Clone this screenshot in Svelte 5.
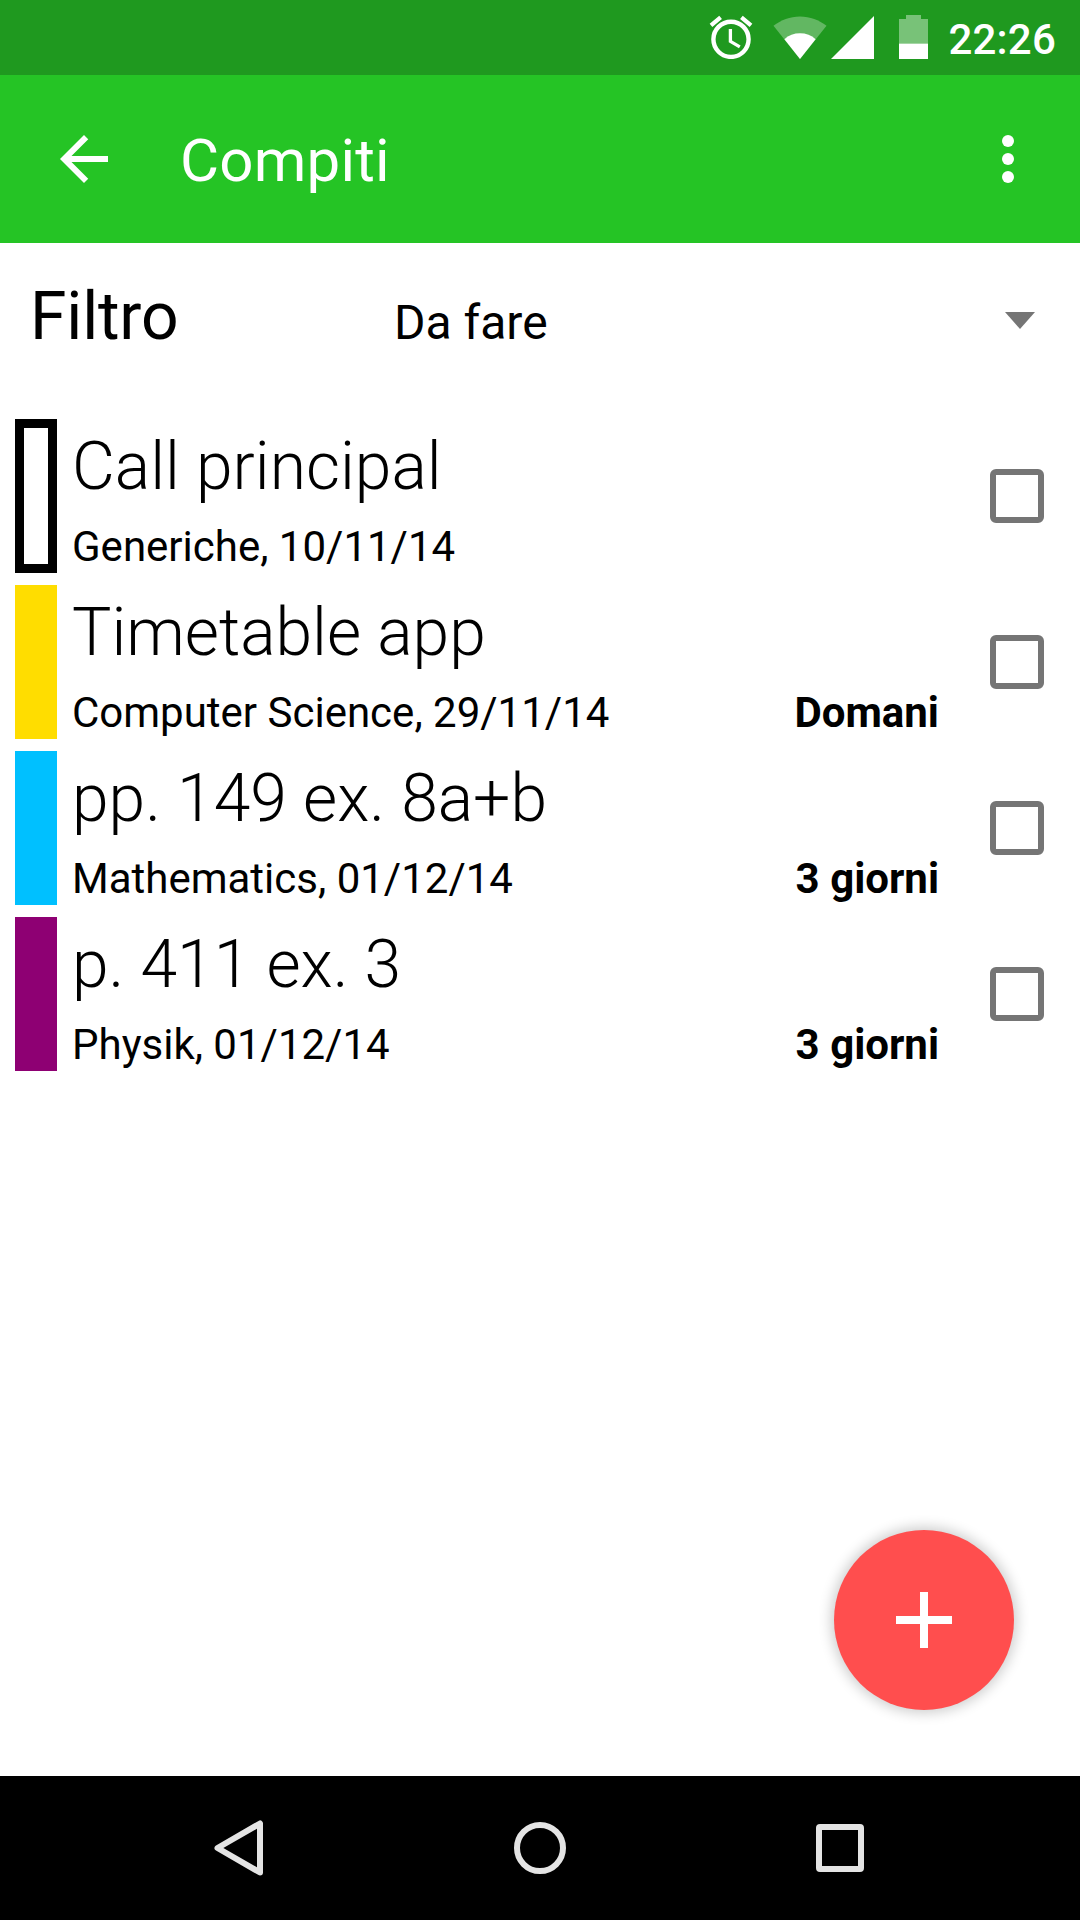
<script lang="ts">
  interface Task {
    title: string
    subject: string
    date: string
    due?: string
    color?: string
    done: boolean
  }

  let tasks = $state<Task[]>([
    { title: 'Call principal', subject: 'Generiche', date: '10/11/14', done: false },
    { title: 'Timetable app', subject: 'Computer Science', date: '29/11/14', due: 'Domani', color: '#ffdd00', done: false },
    { title: 'pp. 149 ex. 8a+b', subject: 'Mathematics', date: '01/12/14', due: '3 giorni', color: '#00c0ff', done: false },
    { title: 'p. 411 ex. 3', subject: 'Physik', date: '01/12/14', due: '3 giorni', color: '#8e0073', done: false },
  ])
</script>

<div class="screen">
  <div class="status">
    <svg class="alarm" width="44" height="44" viewBox="0 0 44 44">
      <g fill="none" stroke="#fff">
        <circle cx="22" cy="24.3" r="17.6" stroke-width="4.4" />
        <path d="M21.4 14v12.4l9.4 5.5" stroke-width="3.3" />
        <path d="M2 10.4 11.6 2.4M42 10.4 32.4 2.4" stroke-width="4.2" />
      </g>
    </svg>
    <svg class="wifi" width="54" height="44" viewBox="0 0 54 44">
      <path d="M.5 9.8C8 4 17 .5 27 .5S46 4 53.5 9.8L27 43z" fill="#fff" opacity=".3" />
      <path d="M11.4 23.2C15.6 19.3 21 17.3 27 17.3s11.4 2 15.6 5.9L27 43z" fill="#fff" />
    </svg>
    <svg class="signal" width="43" height="43" viewBox="0 0 43 43">
      <path d="M0 43H43V0z" fill="#fff" />
    </svg>
    <svg class="battery" width="29" height="44" viewBox="0 0 29 44">
      <path d="M7 0h15v4h7v24.5H0V4h7z" fill="#fff" opacity=".4" />
      <path d="M0 28.5h29V44H0z" fill="#fff" />
    </svg>
    <span class="clock">22:26</span>
  </div>

  <header>
    <button class="icon-btn" aria-label="Indietro">
      <svg width="72" height="72" viewBox="0 0 24 24">
        <path d="M20 11H7.83l5.59-5.59L12 4l-8 8 8 8 1.41-1.41L7.83 13H20z" fill="#fff" />
      </svg>
    </button>
    <h1>Compiti</h1>
    <button class="icon-btn" aria-label="Altre opzioni">
      <svg width="72" height="72" viewBox="0 0 24 24" fill="#fff">
        <circle cx="12" cy="6" r="2" />
        <circle cx="12" cy="12" r="2" />
        <circle cx="12" cy="18" r="2" />
      </svg>
    </button>
  </header>

  <main>
    <div class="filter">
      <span class="label">Filtro</span>
      <span class="value">Da fare</span>
      <svg width="30" height="17" viewBox="0 0 30 17">
        <path d="M0 0H30L15 17z" fill="#757575" />
      </svg>
    </div>

    <ul>
      {#each tasks as task (task.title)}
        <li>
          <span class="bar" class:outlined={!task.color} style:background={task.color}></span>
          <div class="text">
            <div class="title">{task.title}</div>
            <div class="meta">
              <span>{task.subject}, {task.date}</span>
              {#if task.due}<b>{task.due}</b>{/if}
            </div>
          </div>
          <input type="checkbox" aria-label={task.title} bind:checked={task.done} />
        </li>
      {/each}
    </ul>

    <button class="fab" aria-label="Aggiungi">
      <svg width="56" height="56" viewBox="0 0 56 56">
        <path d="M28 0v56M0 28h56" stroke="#fff" stroke-width="8" />
      </svg>
    </button>
  </main>

  <nav>
    <svg width="64" height="64" viewBox="0 0 64 64">
      <path d="M52 7.5v49L9.5 32z" />
    </svg>
    <svg width="64" height="64" viewBox="0 0 64 64">
      <circle cx="32" cy="32" r="23" />
    </svg>
    <svg width="64" height="64" viewBox="0 0 64 64">
      <rect x="11" y="11" width="42" height="42" rx="1" />
    </svg>
  </nav>
</div>

<style>
  :global(body) {
    margin: 0;
  }

  .screen {
    display: flex;
    flex-direction: column;
    width: 1080px;
    height: 1920px;
    overflow: hidden;
    background: #fff;
    color: #000;
    font-family: Roboto, sans-serif;
  }

  svg {
    display: block;
    flex: none;
  }

  button {
    padding: 0;
    border: 0;
    background: none;
  }

  .status {
    display: flex;
    align-items: flex-start;
    justify-content: flex-end;
    box-sizing: border-box;
    height: 75px;
    padding: 15px 24px 0 0;
    background: #1f991f;
  }

  .alarm {
    margin-right: 20px;
  }

  .wifi {
    margin: 1px 4px 0 0;
  }

  .signal {
    margin: 1px 25px 0 0;
  }

  .battery {
    margin-right: 20px;
  }

  .clock {
    color: #fff;
    font-size: 42px;
    font-weight: 500;
    letter-spacing: 0.2px;
    line-height: 49px;
  }

  header {
    display: flex;
    align-items: center;
    box-sizing: border-box;
    height: 168px;
    padding: 0 36px 0 48px;
    background: #25c425;
  }

  h1 {
    flex: 1;
    margin: 4px 0 0 60px;
    color: #fff;
    font-size: 60px;
    font-weight: 400;
    letter-spacing: 0.2px;
    line-height: 70px;
  }

  main {
    position: relative;
    flex: 1;
  }

  .filter {
    display: flex;
    align-items: flex-start;
    box-sizing: border-box;
    height: 176px;
    padding: 35px 45px 0 30px;
  }

  .label {
    width: 364px;
    font-size: 66px;
    letter-spacing: -0.2px;
    line-height: 77px;
  }

  .value {
    flex: 1;
    margin-top: 16px;
    font-size: 48px;
    line-height: 57px;
  }

  .filter svg {
    margin-top: 34px;
  }

  ul {
    display: flex;
    flex-direction: column;
    gap: 12px;
    margin: 0;
    padding: 0 36px 0 15px;
    list-style: none;
  }

  li {
    display: flex;
    align-items: center;
    height: 154px;
  }

  .bar {
    box-sizing: border-box;
    width: 42px;
    height: 154px;
  }

  .bar.outlined {
    border: 9px solid #000;
  }

  .text {
    flex: 1;
    align-self: flex-start;
    margin: 9px 51px 0 15px;
  }

  .title {
    font-size: 66px;
    font-weight: 300;
    line-height: 77px;
  }

  .meta {
    display: flex;
    justify-content: space-between;
    margin-top: 17px;
    font-size: 42px;
    line-height: 49px;
  }

  input {
    appearance: none;
    width: 54px;
    height: 54px;
    margin: 0;
    border: 6px solid #757575;
    border-radius: 6px;
  }

  .fab {
    position: absolute;
    right: 66px;
    bottom: 66px;
    display: flex;
    align-items: center;
    justify-content: center;
    width: 180px;
    height: 180px;
    border-radius: 50%;
    background: #ff4e4e;
    box-shadow: 0 0 13px 3px rgba(0, 0, 0, 0.2);
  }

  nav {
    display: flex;
    justify-content: center;
    align-items: center;
    gap: 236px;
    height: 144px;
    background: #000;
  }

  nav svg {
    fill: none;
    stroke: #e4e4e4;
    stroke-width: 6;
    stroke-linejoin: round;
  }
</style>
